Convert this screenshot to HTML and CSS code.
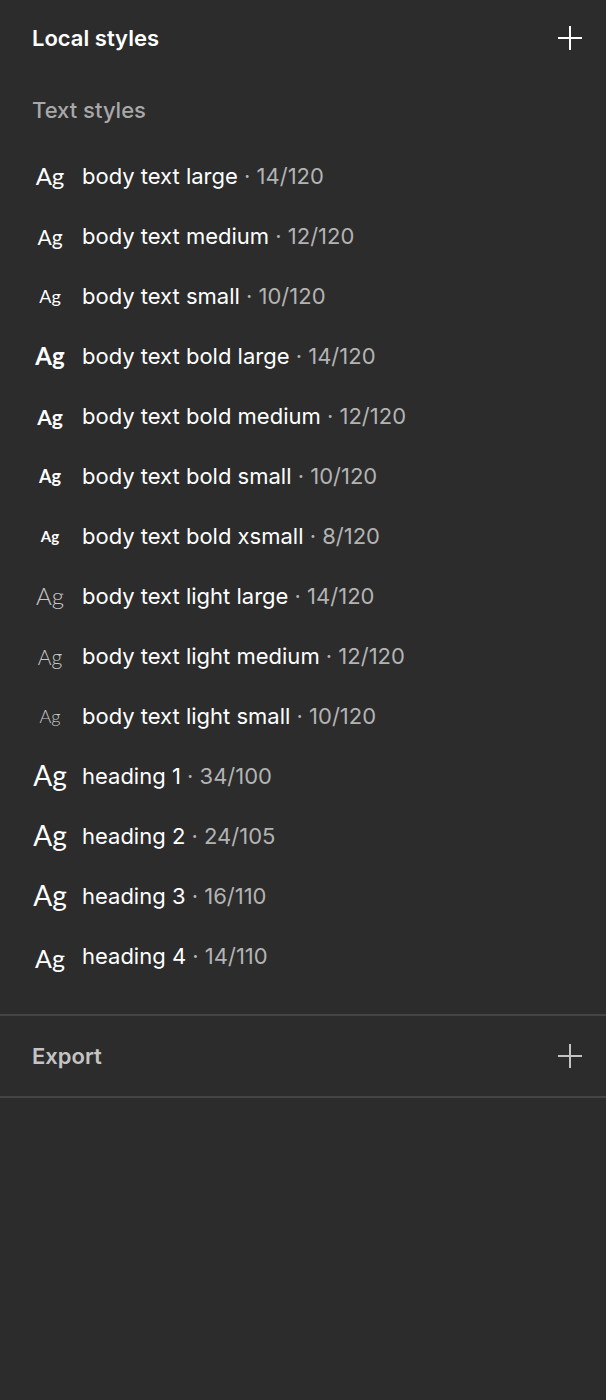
FILE: index.html
```html
<!DOCTYPE html>
<html>
<head>
  <title>Local styles</title>
  <link rel="stylesheet" href="styles.css">
</head>
<body>
  <div class="panel">
    <div class="panel-head">
      <h2 class="panel-title">Local styles</h2>
      <button class="add-btn" aria-label="Add style">
        <svg width="24" height="24" viewBox="0 0 24 24"><path d="M12 0v24M0 12h24" stroke="currentColor" stroke-width="2" fill="none"/></svg>
      </button>
    </div>

    <p class="group-label">Text styles</p>

    <ul class="style-list">
      <li class="style-row"><span class="ag ag-lg">Ag</span><span class="name">body text large</span><span class="meta"> · 14/120</span></li>
      <li class="style-row"><span class="ag ag-md">Ag</span><span class="name">body text medium</span><span class="meta"> · 12/120</span></li>
      <li class="style-row"><span class="ag ag-sm">Ag</span><span class="name">body text small</span><span class="meta"> · 10/120</span></li>
      <li class="style-row"><span class="ag ag-lg bold">Ag</span><span class="name">body text bold large</span><span class="meta"> · 14/120</span></li>
      <li class="style-row"><span class="ag ag-md bold">Ag</span><span class="name">body text bold medium</span><span class="meta"> · 12/120</span></li>
      <li class="style-row"><span class="ag ag-sm bold">Ag</span><span class="name">body text bold small</span><span class="meta"> · 10/120</span></li>
      <li class="style-row"><span class="ag ag-xs bold">Ag</span><span class="name">body text bold xsmall</span><span class="meta"> · 8/120</span></li>
      <li class="style-row"><span class="ag ag-lg light">Ag</span><span class="name">body text light large</span><span class="meta"> · 14/120</span></li>
      <li class="style-row"><span class="ag ag-md light">Ag</span><span class="name">body text light medium</span><span class="meta"> · 12/120</span></li>
      <li class="style-row"><span class="ag ag-sm light">Ag</span><span class="name">body text light small</span><span class="meta"> · 10/120</span></li>
      <li class="style-row"><span class="ag ag-h">Ag</span><span class="name">heading 1</span><span class="meta"> · 34/100</span></li>
      <li class="style-row"><span class="ag ag-h">Ag</span><span class="name">heading 2</span><span class="meta"> · 24/105</span></li>
      <li class="style-row"><span class="ag ag-h">Ag</span><span class="name">heading 3</span><span class="meta"> · 16/110</span></li>
      <li class="style-row"><span class="ag ag-h4">Ag</span><span class="name">heading 4</span><span class="meta"> · 14/110</span></li>
    </ul>

    <div class="export">
      <h2 class="export-title">Export</h2>
      <button class="add-btn dim" aria-label="Add export">
        <svg width="24" height="24" viewBox="0 0 24 24"><path d="M12 0v24M0 12h24" stroke="currentColor" stroke-width="2" fill="none"/></svg>
      </button>
    </div>
  </div>
</body>
</html>
```

FILE: styles.css
```css
* {
  margin: 0;
  padding: 0;
  box-sizing: border-box;
}

body {
  font-family: Inter, "Noto Sans", sans-serif;
  background-color: #2c2c2c;
  color: #fff;
  min-height: 1400px;
}

.panel-head {
  height: 76px;
  padding: 0 24px 0 32px;
  display: flex;
  align-items: center;
  justify-content: space-between;
}

.panel-title {
  font-size: 22px;
  font-weight: 600;
  color: #fff;
}

.add-btn {
  width: 24px;
  height: 24px;
  border: none;
  background: none;
  color: #fff;
  display: flex;
}

.add-btn.dim {
  color: #c4c4c4;
}

.group-label {
  height: 48px;
  margin-top: 10px;
  padding-left: 32px;
  display: flex;
  align-items: center;
  font-size: 22px;
  font-weight: 500;
  color: #a8a8a8;
}

.style-list {
  list-style: none;
  padding: 12px 0 28px;
}

.style-row {
  height: 60px;
  padding-left: 32px;
  display: flex;
  align-items: center;
  font-size: 22px;
}

.ag {
  width: 36px;
  margin-right: 14px;
  font-family: Lato, sans-serif;
  text-align: center;
  color: #fff;
  line-height: 1;
}

.ag-lg { font-size: 24px; }
.ag-md { font-size: 21px; }
.ag-sm { font-size: 18px; }
.ag-xs { font-size: 15px; }
.ag-h { font-size: 28px; padding-bottom: 2px; }
.ag-h4 { font-size: 25px; padding-top: 4px; }

.ag.bold { font-weight: 700; }
.ag.light { font-weight: 300; color: #c8c8c8; }

.name {
  color: #fff;
  white-space: pre;
}

.meta {
  color: #b3b3b3;
  white-space: pre;
}

.export {
  height: 84px;
  border-top: 2px solid #444;
  border-bottom: 2px solid #444;
  padding: 0 24px 0 32px;
  display: flex;
  align-items: center;
  justify-content: space-between;
}

.export-title {
  font-size: 22px;
  font-weight: 600;
  color: #c4c4c4;
}
```
